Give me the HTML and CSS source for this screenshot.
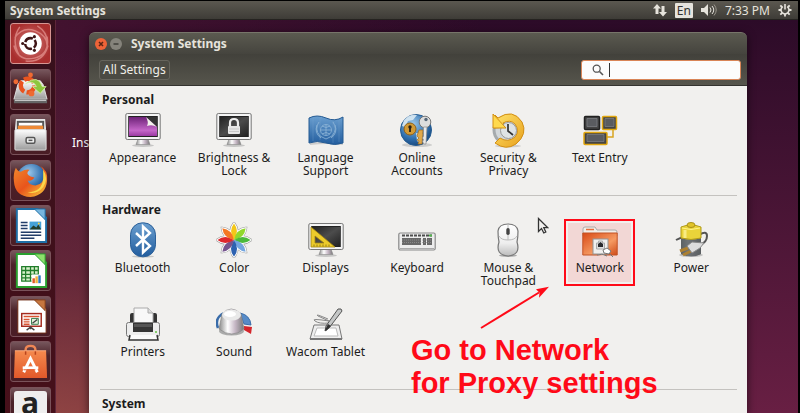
FILE: index.html
```html
<!DOCTYPE html>
<html lang="en">
<head>
<meta charset="utf-8">
<title>System Settings</title>
<link rel="stylesheet" href="styles.css">
</head>
<body>
<svg class="defs" aria-hidden="true">
  <defs>
    <linearGradient id="violet" x1="0" y1="0" x2="0" y2="1"><stop offset="0" stop-color="#6d2277"/><stop offset=".7" stop-color="#c566c9"/><stop offset="1" stop-color="#9b3aa2"/></linearGradient>
    <linearGradient id="dark" x1="0" y1="0" x2="1" y2="1"><stop offset="0" stop-color="#222"/><stop offset=".5" stop-color="#4c4c4c"/><stop offset="1" stop-color="#222"/></linearGradient>
    <linearGradient id="metal" x1="0" y1="0" x2="0" y2="1"><stop offset="0" stop-color="#fff"/><stop offset="1" stop-color="#9b9b9b"/></linearGradient>
    <linearGradient id="mouse" x1="0" y1="0" x2="0" y2="1"><stop offset="0" stop-color="#fff"/><stop offset=".6" stop-color="#eee"/><stop offset="1" stop-color="#bbb"/></linearGradient>
    <linearGradient id="side" x1="0" y1="0" x2="1" y2="0"><stop offset="0" stop-color="#888"/><stop offset=".35" stop-color="#fff"/><stop offset=".65" stop-color="#c5b6c4"/><stop offset="1" stop-color="#777"/></linearGradient>
    <linearGradient id="blue" x1="0" y1="0" x2="0" y2="1"><stop offset="0" stop-color="#6b9fd0"/><stop offset="1" stop-color="#225d9e"/></linearGradient>
    <linearGradient id="gold" x1="0" y1="0" x2="1" y2="1"><stop offset="0" stop-color="#ffe36a"/><stop offset="1" stop-color="#e8a01c"/></linearGradient>
    <linearGradient id="orange" x1="0" y1="0" x2="1" y2="1"><stop offset="0" stop-color="#d94a16"/><stop offset=".6" stop-color="#f59a62"/><stop offset="1" stop-color="#cf4a18"/></linearGradient>
    <linearGradient id="bag" x1="0" y1="0" x2="0" y2="1"><stop offset="0" stop-color="#f58a4e"/><stop offset="1" stop-color="#e2582a"/></linearGradient>
    <linearGradient id="fox" x1="0" y1="0" x2="1" y2="1"><stop offset="0" stop-color="#f08a2c"/><stop offset=".5" stop-color="#e8541c"/><stop offset="1" stop-color="#fbd23c"/></linearGradient>
    <radialGradient id="globe" cx=".4" cy=".3" r=".8"><stop offset="0" stop-color="#9cc8ea"/><stop offset=".6" stop-color="#2f6fae"/><stop offset="1" stop-color="#123b6c"/></radialGradient>
    <symbol id="screen" viewBox="0 0 36 36">
      <ellipse cx="18" cy="33.500" rx="11" ry="1.500" fill="#aaa" opacity=".6"/>
      <path d="M13 27h10l2 5.500H11z" fill="url(#side)" stroke="#888" stroke-width=".6"/>
      <rect x=".8" y="1.500" width="34.400" height="26" rx="1.500" fill="#f4f4f4" stroke="#777"/>
      <rect x="3.200" y="4" width="29.600" height="21" fill="#222"/>
    </symbol>
  </defs>
</svg>

<div class="desktop">
  <header class="panel">
    <span class="panel-title">System Settings</span>
    <div class="indicators">
      <svg class="ind-net" viewBox="0 0 14 14"><path fill="#e6e3dc" d="M4 1 8 5.500H5.500V11h-3V5.500H0zM10 13.500 14 9h-2.500V3h-3v6H6z"/></svg>
      <span class="lang">En</span>
      <svg class="ind-sound" viewBox="0 0 16 14"><path fill="#e6e3dc" d="M0 5h3l4-4v12L3 9H0z"/><path fill="none" stroke="#e6e3dc" d="M9 4.500q2 2.500 0 5M11 3q3.500 4 0 8"/><path fill="none" stroke="#99958c" d="M13 1.500q4.500 5.500 0 11"/></svg>
      <span class="clock">7:33 PM</span>
      <svg class="ind-gear" viewBox="0 0 14 14"><g fill="none" stroke="#e6e3dc"><path stroke-width="1.600" d="M4.800 3.600a4 4 0 1 0 4.400 0M7 1v5.500"/><path stroke-width="1.800" d="M11 7h2.500M.5 7H3M7 11v2.500M9.800 9.800l1.900 1.900M4.200 9.800l-1.900 1.900M10 4l1.700-1.700M4 4 2.300 2.300"/></g></svg>
    </div>
  </header>

  <div class="workspace">
    <nav class="launcher" aria-label="Launcher">
      <a class="tile dash" href="#" aria-label="Dash"><svg viewBox="0 0 40 40"><g fill="none" stroke="#f0a7a1" stroke-width="1.500" opacity=".6"><path d="M4 14Q12 2 25 7T37 24M3 22Q8 39 24 35T37 13M9 3Q0 16 8 31M15 38Q33 40 38 22M27 2Q38 9 37 20"/></g><circle cx="20" cy="20" r="11.500" fill="#fff"/><circle cx="20" cy="20" r="5.500" fill="none" stroke="#3e1516" stroke-width="2.600" stroke-dasharray="9.500 2" stroke-dashoffset="4.700"/><circle cx="12" cy="20" r="1.600" fill="#3e1516"/><circle cx="24" cy="13" r="1.600" fill="#3e1516"/><circle cx="24" cy="27" r="1.600" fill="#3e1516"/></svg></a>
      <a class="tile" href="#" aria-label="Install"><svg viewBox="0 0 40 40"><path d="m7 15 3-4h20l3 4 4 15H3z" fill="url(#metal)" stroke="#ddd"/><path d="M3 30h34v4H3z" fill="#666"/><path d="M4 31h32" stroke="#eee"/><circle cx="17" cy="16" r="7" fill="none" stroke="#e9541f" stroke-width="4.500" stroke-dasharray="12 2.500"/><circle cx="5" cy="12" r="2.500" fill="#ef6a32"/><circle cx="20" cy="5" r="2.500" fill="#ef6a32"/><circle cx="21" cy="24" r="3" fill="#ef6a32"/><path d="M15 14q13-10 17 3h4l-6 7-8-7h4q-3-7-11-3z" fill="#8cc63f" stroke="#d9f0ae" stroke-width=".8"/></svg></a>
      <a class="tile" href="#" aria-label="Files"><svg viewBox="0 0 40 40"><path d="M5 4h30l1 11H4z" fill="#e8e8e8"/><path d="M6 6h28v9H6z" fill="#555"/><path d="M8 8h24v3H8z" fill="#fff"/><path d="M7 11h26v4H7z" fill="#ee8a36"/><rect x="4" y="15" width="32" height="21" rx="1" fill="url(#metal)" stroke="#ddd"/><rect x="15.500" y="23" width="9" height="6" rx="1.500" fill="#eee" stroke="#555" stroke-width="1.500"/><path d="M18 26h4" stroke="#555" stroke-width="1.500"/></svg></a>
      <a class="tile" href="#" aria-label="Firefox"><svg viewBox="0 0 40 40"><circle cx="21" cy="18" r="15" fill="url(#globe)"/><path d="M5 7q2 4 5 4 5-3 9-2-5 4 1 7l4 1q-2 4-7 3 2 5 8 5 9-1 9-11 0-5-4-9 8 4 7 15-1 15-17 17Q4 36 3 21 2 13 5 7z" fill="url(#fox)"/><path d="M33 9q6 9 0 18-7 8-16 5 15 0 16-14z" fill="#fbd84b"/></svg></a>
      <a class="tile" href="#" aria-label="Writer"><svg viewBox="0 0 40 40"><path d="M6 3h21l9 9v25H6z" fill="#fff" stroke="#1e6ea5" stroke-width="2"/><path d="M24 3h11v11z" fill="#78b6df" stroke="#1e6ea5"/><path d="M10 17h7M10 20h7M10 23h7M10 27h21M10 30h21M10 33h14" stroke="#223d69" stroke-width="1.500"/><path d="M19 16h12v8H19z" fill="#46a2d8"/><path d="m19 24 4-4 3 2 2-3 3 5z" fill="#253e2a"/><circle cx="28.500" cy="18" r="1" fill="#ffd43d"/></svg></a>
      <a class="tile" href="#" aria-label="Calc"><svg viewBox="0 0 40 40"><path d="M6 3h21l9 9v25H6z" fill="#fff" stroke="#29a02f" stroke-width="2"/><path d="M24 3h11v11z" fill="#8de06c" stroke="#29a02f"/><path d="M11 16h17v15H11z" fill="#d7f1ca"/><path d="M11 16h17v15H11zM11 20h17M11 24h17M11 27.500h17M15 16v15M20 16v15M24 16v15" fill="none" stroke="#217d2b" stroke-width="1.300"/><path d="M21 24h10v10H21z" fill="#fff"/><path d="M22 28h2.500v5H22z" fill="#e15a27"/><path d="M25 26h2.500v7H25z" fill="#f0b43b"/><path d="M28 25h2.500v8H28z" fill="#2b79c0"/></svg></a>
      <a class="tile" href="#" aria-label="Impress"><svg viewBox="0 0 40 40"><path d="M7 3h20l9 9v25H7z" fill="#fff" stroke="#6e2a12"/><path d="M24 3h11v11z" fill="#c6763f" stroke="#87411b"/><rect x="11" y="17" width="20" height="13" fill="#fff" stroke="#a52b1e" stroke-width="1.500"/><path d="M13 20h16M13 23h6M13 25.500h6M13 28h6" stroke="#d95632" stroke-width="1.500"/><path d="M21 22h7v6h-7z" fill="#e4f0db" stroke="#387d4b"/><path d="m22 27 5-4M16 34l4-3 4 3M20 30v3" fill="none" stroke="#444" stroke-width="1.400"/></svg></a>
      <a class="tile" href="#" aria-label="Software Center"><svg viewBox="0 0 40 40"><path d="M15 13V8q0-4 5-4t5 4v5" fill="none" stroke="#ef8655" stroke-width="2.500"/><path d="M4 9h32l1 28H3z" fill="url(#bag)"/><path d="M15 13V9M25 13V9" stroke="#b8431c" stroke-width="1.500"/><path d="M4 9h32" stroke="#f9ab80"/><path d="m13 31 7-14 7 14" fill="none" stroke="#fff" stroke-width="3"/><path d="M12 26.500h16" stroke="#fff" stroke-width="3"/><path d="M13 28.500h12" stroke="#e2582a"/></svg></a>
      <a class="tile amazon" href="#" aria-label="Amazon"><span>a</span></a>
    </nav>

    <span class="desktop-label">Inst</span>

    <main class="window">
      <div class="titlebar">
        <button class="win-btn close" aria-label="Close"><svg viewBox="0 0 12 12"><path d="m4 4 4 4m0-4-4 4" stroke="#5b2413" stroke-width="1.500"/></svg></button>
        <button class="win-btn" aria-label="Minimize"><svg viewBox="0 0 12 12"><path d="M3.500 6h5" stroke="#3f3e39" stroke-width="1.500"/></svg></button>
        <h1>System Settings</h1>
      </div>
      <div class="toolbar">
        <button class="all">All Settings</button>
        <label class="search">
          <svg viewBox="0 0 12 12"><circle cx="4.700" cy="4.700" r="3.500" fill="none" stroke="#555" stroke-width="1.300"/><path d="m7.500 7.500 3.500 3.500" stroke="#555" stroke-width="1.600"/></svg>
          <span class="caret"></span>
          <input type="text" aria-label="Search settings">
        </label>
      </div>

      <div class="content">
        <section>
          <h2>Personal</h2>
          <div class="grid">
            <a class="item" href="#"><svg viewBox="0 0 36 36"><use href="#screen"/><path d="M4 5h28v19H4z" fill="url(#violet)"/><path d="M21 5h11v10z" fill="#333"/><path d="M21 5q3 5 1 9 5-2 10 1z" fill="#f2f2ea"/></svg><span>Appearance</span></a>
            <a class="item" href="#"><svg viewBox="0 0 36 36"><use href="#screen"/><path d="M4 5h28v19H4z" fill="url(#dark)"/><path d="M14 15v-4q0-4 4-4t4 4v4" fill="none" stroke="#eee" stroke-width="2.200"/><rect x="12" y="14" width="12" height="8" rx="1" fill="#e8e8e8"/><path d="M13 17h10M13 19.500h10" stroke="#bbb" stroke-width=".7"/></svg><span>Brightness &amp;<br>Lock</span></a>
            <a class="item" href="#"><svg viewBox="0 0 36 36"><path d="M2 32q16-2 33 0" stroke="#aaa" stroke-width="2" opacity=".5"/><path d="M1 6q8-4 17 0t17-1v26q-8 3-17 0T1 31z" fill="url(#blue)" stroke="#245a92"/><path d="M5 6v23M12 5v23M25 9v22M31 8v22" stroke="#7fa9d1" opacity=".3"/><g fill="none" stroke="#8fb6d8" stroke-width=".8"><circle cx="18" cy="18" r="5.500"/><path d="M12.500 18h11M18 12.500v11M14 14q4 3 8 0M14 22q4-3 8 0M11 10q-5 7 1 14l6 3 6-3q6-7 1-14M9 13q-3 8 4 13M27 13q3 8-4 13"/></g></svg><span>Language<br>Support</span></a>
            <a class="item" href="#"><svg viewBox="0 0 36 36"><ellipse cx="18" cy="33" rx="15" ry="2" fill="#aaa" opacity=".5"/><circle cx="17" cy="18" r="15.500" fill="url(#globe)" stroke="#255c92"/><path d="M5 8q5-6 13-5l-4 5-5 1-3 6-3-1zM17 21l7 1-2 10-4-3zM22 6l5 2-2 5-5-3z" fill="#e2eef6" opacity=".85"/><circle cx="11" cy="17" r="6" fill="#d29a35" stroke="#8f6118"/><circle cx="11" cy="15" r="1.700" fill="#282018"/><path d="M11 15v5" stroke="#282018" stroke-width="1.800"/><path d="M20 18h4l-1 14h-4l1-3-2-1 2-2-2-2z" fill="#e0a84a" stroke="#9d6d22" stroke-width=".7"/><circle cx="26" cy="10" r="5.800" fill="#ddd" stroke="#777"/><circle cx="27" cy="7.500" r="1.700" fill="#567"/><path d="M24.500 15h3.500l-1 17h-2.500l-1-3 1-1-1-2 1-2z" fill="#e8e8e8" stroke="#888" stroke-width=".7"/></svg><span>Online<br>Accounts</span></a>
            <a class="item" href="#"><svg viewBox="0 0 36 36"><ellipse cx="18" cy="34" rx="13" ry="1.500" fill="#aaa" opacity=".5"/><circle cx="18" cy="18" r="14" fill="#d2d7da" stroke="#a5aaad" stroke-width="3"/><path d="M5 3 4 16l13-1-4-4q7-4 12 1 5 7 0 13-7 6-15 1l-5 5q11 8 21 1 12-10 6-22Q23-4 8 6z" fill="url(#gold)" stroke="#d28f15"/><circle cx="18.500" cy="18.500" r="8" fill="#dfe3e5" stroke="#999"/><path d="M18 12v7l5 4" fill="none" stroke="#333" stroke-width="1.700"/><path d="M3 2v14h13z" fill="#ffd94e" stroke="#d28f15"/></svg><span>Security &amp;<br>Privacy</span></a>
            <a class="item" href="#"><svg viewBox="0 0 36 36"><path d="M31 17v8h-7" fill="none" stroke="#d8a420" stroke-width="1.500"/><g stroke-width="1.500"><rect x="2.500" y="4.500" width="15" height="13" rx="1" fill="#444" stroke="#222"/><rect x="20.500" y="4.500" width="14" height="13" rx="1" fill="#444" stroke="#e2a70f"/><rect x="2" y="20.500" width="23" height="12" rx="1" fill="#444" stroke="#e2a70f"/></g><path d="M5 6.500h10v8H5zM23 6.500h9v8h-9zM5 22.500h17v7H5z" fill="#5a5c60" stroke="#7a7c82" stroke-width=".8"/></svg><span>Text Entry</span></a>
          </div>
        </section>

        <section>
          <h2>Hardware</h2>
          <div class="grid">
            <a class="item" href="#"><svg viewBox="0 0 36 36"><ellipse cx="18" cy="34.500" rx="11" ry="1" fill="#999" opacity=".5"/><rect x="5.500" y=".8" width="25" height="34" rx="12" fill="url(#blue)" stroke="#2b6099"/><path d="m11 11 14 13-7 6.500v-26l7 6.500-14 13" fill="none" stroke="#fff" stroke-width="2.400"/></svg><span>Bluetooth</span></a>
            <a class="item" href="#"><svg viewBox="0 0 36 36"><defs><path id="petal" d="M18 18Q12 9 18 1.500q6 7.500 0 16.500"/></defs><g fill="#999" stroke="#999" stroke-width="3"><use href="#petal"/><use href="#petal" transform="rotate(45 18 18)"/><use href="#petal" transform="rotate(90 18 18)"/><use href="#petal" transform="rotate(135 18 18)"/><use href="#petal" transform="rotate(180 18 18)"/><use href="#petal" transform="rotate(225 18 18)"/><use href="#petal" transform="rotate(270 18 18)"/><use href="#petal" transform="rotate(315 18 18)"/></g><g stroke="#fff" stroke-width="2"><use href="#petal"/><use href="#petal" transform="rotate(45 18 18)"/><use href="#petal" transform="rotate(90 18 18)"/><use href="#petal" transform="rotate(135 18 18)"/><use href="#petal" transform="rotate(180 18 18)"/><use href="#petal" transform="rotate(225 18 18)"/><use href="#petal" transform="rotate(270 18 18)"/><use href="#petal" transform="rotate(315 18 18)"/></g><g><use href="#petal" fill="#f3c719"/><use href="#petal" fill="#91d82c" transform="rotate(45 18 18)"/><use href="#petal" fill="#4cba3c" transform="rotate(90 18 18)"/><use href="#petal" fill="#73a5df" transform="rotate(135 18 18)"/><use href="#petal" fill="#2d62b0" transform="rotate(180 18 18)"/><use href="#petal" fill="#76558e" transform="rotate(225 18 18)"/><use href="#petal" fill="#df282d" transform="rotate(270 18 18)"/><use href="#petal" fill="#f47824" transform="rotate(315 18 18)"/></g></svg><span>Color</span></a>
            <a class="item" href="#"><svg viewBox="0 0 36 36"><use href="#screen"/><path d="M4 5h28v19H4z" fill="url(#dark)"/><path fill-rule="evenodd" d="M3 5v20h24zM7 14v7h9z" fill="#eccb2b" stroke="#a18311" stroke-width=".8"/><path d="M6 24.500v-2m3 2v-2m3 2v-2m3 2v-2m3 2v-2m3 2v-2" stroke="#735d0f" stroke-width=".7"/></svg><span>Displays</span></a>
            <a class="item" href="#"><svg class="wide" viewBox="0 0 38 36"><rect x=".8" y="11" width="36.400" height="17" rx="1.500" fill="#ececec" stroke="#898989" stroke-width="1.200"/><path d="M2 26.500h34" stroke="#aaa"/><path d="M4 13.500h30" stroke="#4d4d4d" stroke-width="2" stroke-dasharray="3 1"/><path d="M4 16h19v7H4zM25 16h3v7h-3zM29 16h5v7h-5z" fill="#686868"/><path d="M4 18h30M4 20.500h30" stroke="#999" stroke-width=".7" stroke-dasharray="1 1"/><path d="M31 13.500h3" stroke="#51b54b" stroke-width="2"/></svg><span>Keyboard</span></a>
            <a class="item" href="#"><svg viewBox="0 0 36 36"><ellipse cx="18" cy="33.500" rx="9" ry="1.500" fill="#aaa"/><path d="M18 2q9 0 10 7 0 7-1 11 4 13-9 14-13-1-9-14-1-4-1-11 1-7 10-7z" fill="url(#mouse)" stroke="#777" stroke-width="1.200"/><path d="M9 14q2 4 9 4t9-4M18 3v15" fill="none" stroke="#bbb"/><rect x="16.300" y="6" width="3.400" height="7" rx="1.700" fill="#444"/></svg><span>Mouse &amp;<br>Touchpad</span></a>
            <a class="item selected" href="#"><svg viewBox="0 0 36 36"><path d="M1 11V7q0-2 2-2h10l2 3h18q2 0 2 2v4H1z" fill="#f2eee9" stroke="#aaa"/><path d="M4 7.500h8" stroke="#e66c3b" stroke-width="1.500"/><path d="M.8 11h34.400v22H.8z" fill="url(#orange)" stroke="#c25325"/><rect x="11" y="17" width="15" height="15" fill="#f0efee" stroke="#949494"/><path d="M14.500 27v-6h2v-2h4v2h2v6z" fill="#ddd" stroke="#aaa"/><path d="M16 25v-3l2.500-2 2.500 2v3z" fill="#29292d"/><path d="m21 28 4-2 4 3-2 3-5-1zM15 33q5-2 10 1M27 31l4 4" fill="#fff" stroke="#777"/></svg><span>Network</span></a>
            <a class="item" href="#"><svg viewBox="0 0 36 36"><path d="M3 18q5-3 10-3t13-2q8-5 8 1t-7 9" fill="none" stroke="#555" stroke-width="2"/><ellipse cx="18" cy="33" rx="12" ry="2" fill="#999" opacity=".5"/><path d="M8 6h20v26q-10 5-20 0z" fill="url(#side)"/><path d="M8 16h20v16q-10 5-20 0z" fill="#555b5d" opacity=".85"/><path d="M8 5q10-4 20 0v11q-10 3-20 0z" fill="#ead33a" stroke="#b29b1b"/><path d="M9 6q9 3 18 0" fill="none" stroke="#fff389"/><ellipse cx="18" cy="3" rx="4" ry="2.500" fill="#e1c329" stroke="#aa9119"/><path d="M12 8v8" stroke="#fff6a4" stroke-width="3" opacity=".7"/><path d="m7 29 8-3M10 33l8-4" stroke="#ad8030" stroke-width="3"/><path d="m14 24 5-4 12 1-4 5-8 5z" fill="#ddd" stroke="#888"/></svg><span>Power</span></a>
            <a class="item" href="#"><svg viewBox="0 0 36 36"><rect x="5" y="7" width="27" height="15" rx="2" fill="#333"/><path d="M9 2h14l5 5v12H9z" fill="#f8f8f8" stroke="#aaa"/><path d="M23 2v5h5" fill="#ddd" stroke="#aaa"/><rect x="1.500" y="16.500" width="33" height="14" rx="2" fill="#ededed" stroke="#777"/><path d="M8 17h20v9H8z" fill="#353535"/><path d="M9 18h18v3H9z" fill="#555"/><path d="m5 29-1 5h29l-1-5" fill="#fafafa" stroke="#333" stroke-width="1.500"/><path d="M30 26h2" stroke="#63c442" stroke-width="1.500"/></svg><span>Printers</span></a>
            <a class="item" href="#"><svg viewBox="0 0 36 36"><path d="M2 22Q-2 12 8 7" fill="none" stroke="#396ca9" stroke-width="2.500"/><path d="M24 7q10 2 11 12l-7-1z" fill="#578bc7" stroke="#396ca9"/><path d="m28 20 8 1-1 7-7-4z" fill="#d4252b"/><ellipse cx="15.500" cy="25" rx="12.500" ry="4.500" fill="#aaa"/><path d="M6 8q9-10 19 0l3 15q-12 10-25 0z" fill="url(#side)" stroke="#888" stroke-width=".7"/><ellipse cx="15.500" cy="9" rx="9.500" ry="5.500" fill="#e9e9e9"/><ellipse cx="14" cy="8" rx="6" ry="3" fill="#fff"/></svg><span>Sound</span></a>
            <a class="item" href="#"><svg viewBox="0 0 36 36"><path d="M6 19h25l3 14H2z" fill="#eee" stroke="#777"/><path d="M9 22h19l2 8H6z" fill="#fff" stroke="#bbb"/><path d="M2 32h32v2H2z" fill="#777"/><path d="M20 13Q6 7 10 10l11 5Q2 12 7 15q4 3 14 2" fill="none" stroke="#888"/><path d="m18 20 12-17q4-1 4 2L21 22l-4 3z" fill="#c5c7c7" stroke="#555"/><path d="m20 18 3 2-5 5-1-1z" fill="#333"/></svg><span>Wacom Tablet</span></a>
          </div>
        </section>

        <section>
          <h2>System</h2>
        </section>

        <svg class="pointer" viewBox="0 0 12 18"><path d="M1.500 1.500v13l3-3 2.300 4.500 2-1-2-4.300h4z" fill="#f1f0ee" stroke="#333" stroke-width="1.300"/></svg>
        <svg class="arrow" viewBox="0 0 72 44"><path d="M1 42 59 6.500" stroke="#ff0a18" stroke-width="2"/><path d="m69 .8-13 2.500 3.500 3.500-.5 5z" fill="#ff0a18"/></svg>
        <p class="note">Go to Network<br>for Proxy settings</p>
      </div>
    </main>
  </div>
</div>
</body>
</html>
```

FILE: styles.css
```css
* { box-sizing: border-box; }

body {
  margin: 0;
  background: #000;
  color: #1c1c1c;
  font: 12px/13px "Noto Sans", "Open Sans", sans-serif;
}

h1, h2, p { margin: 0; }
a { color: inherit; text-decoration: none; }
button, input { font: inherit; }
svg { display: block; }

.defs { position: absolute; width: 0; height: 0; }

.desktop {
  display: flex;
  flex-direction: column;
  height: 100vh;
  padding: 1px 2px 0 5px;
  overflow: hidden;
}

/* Top panel */
.panel {
  display: flex;
  flex: none;
  align-items: center;
  justify-content: space-between;
  height: 19px;
  padding: 0 6px 0 5px;
  background: linear-gradient(#5b5850, #3e3c37);
  border-bottom: 1px solid #252320;
  color: #e6e3dc;
}
.panel-title { font-weight: 700; }
.indicators { display: flex; align-items: center; gap: 8px; }
.ind-net, .ind-gear { width: 14px; height: 14px; }
.ind-sound { width: 16px; height: 14px; }
.lang {
  padding: 1px 2px;
  background: #e6e3dc;
  border-radius: 1px;
  color: #33312d;
}

/* Workspace */
.workspace {
  display: flex;
  flex: 1;
  min-height: 0;
  background:
    radial-gradient(circle at 5% 120%, #a65348 0, #7b373f88 25%, transparent 50%),
    linear-gradient(90deg, #451330 0, transparent 60%),
    linear-gradient(#2c0b28, #681f43);
}

/* Launcher */
.launcher {
  display: grid;
  flex: none;
  grid-template-rows: repeat(9, 1fr);
  align-items: center;
  justify-items: center;
  width: 51px;
  height: calc(100vh - 3px);
  padding-top: 1px;
  background: linear-gradient(#36101c, #47101a);
  border-right: 1px solid #5e2639;
}
.tile {
  width: 41px;
  height: 41px;
  background: linear-gradient(#76565c, #4b2229 35%, #4a1d25);
  border: 1px solid #7a525a;
  border-radius: 3px;
}
.tile svg { width: 39px; height: 39px; }
.dash { background: radial-gradient(#d67d79, #a92e2e 75%); border-color: #d79592; }
.amazon { padding: 3px; }
.amazon span {
  display: block;
  height: 34px;
  background: #eee;
  border-radius: 3px;
  color: #222;
  font: 700 30px/24px "Open Sans", sans-serif;
  text-align: center;
}

.desktop-label {
  flex: none;
  width: 33px;
  padding: 116px 0 0 16px;
  overflow: hidden;
  color: #fff;
}

/* Settings window */
.window {
  display: flex;
  flex: 1;
  flex-direction: column;
  min-width: 0;
  margin: 12px 51px 0 0;
  border-radius: 6px 6px 0 0;
  box-shadow: 0 2px 8px #0009;
}
.titlebar {
  display: flex;
  align-items: center;
  gap: 3px;
  height: 22px;
  padding: 0 6px;
  background: linear-gradient(#5b5a50, #45443e);
  border-top: 1px solid #77756a;
  border-radius: 6px 6px 0 0;
  color: #e6e3dc;
}
.titlebar h1 { margin-left: 6px; font-size: 12px; }
.win-btn {
  width: 12px;
  height: 12px;
  padding: 0;
  background: #85837b;
  border: 0;
  border-radius: 50%;
}
.win-btn.close { background: #ee6338; }

.toolbar {
  display: flex;
  align-items: center;
  justify-content: space-between;
  height: 32px;
  padding: 0 6px 0 10px;
  background: linear-gradient(#42413b, #56554c);
  border-bottom: 1px solid #33322e;
}
.all {
  height: 20px;
  padding: 0 3px;
  background: #4b4a43;
  border: 1px solid #66645c;
  border-radius: 3px;
  color: #f0eee8;
}
.search { position: relative; width: 160px; }
.search svg { position: absolute; top: 4px; left: 11px; width: 12px; height: 12px; }
.caret { position: absolute; top: 3px; left: 28px; width: 1px; height: 14px; background: #333; }
.search input {
  display: block;
  width: 100%;
  height: 20px;
  padding: 0 6px 0 30px;
  background: #fcfcfc;
  border: 1px solid #d98557;
  border-radius: 3px;
  outline: 0;
}

.content {
  position: relative;
  flex: 1;
  min-height: 0;
  padding: 0 10px 0 8px;
  background: #f1f0ee;
}
section {
  margin-left: 3px;
  padding: 6px 0 18px;
  border-bottom: 1px solid #c4c2bf;
}
section:last-of-type { padding-bottom: 0; border: 0; }
h2 { margin-left: 2px; font-size: 12px; line-height: 16px; }

.grid {
  display: grid;
  grid-template-columns: repeat(7, 1fr);
  grid-auto-rows: 65px;
  row-gap: 19px;
  margin: 4px 0 0 -3px;
}
.item {
  position: relative;
  display: flex;
  flex-direction: column;
  align-items: center;
  gap: 3px;
  text-align: center;
  white-space: nowrap;
}
.item svg { flex: none; width: 36px; height: 36px; }
.item .wide { width: 38px; }
.selected::before {
  position: absolute;
  top: -3px;
  right: 11px;
  left: 10px;
  height: 63px;
  background: #ff00001a;
  border: 2px solid #ff0a18;
  box-shadow: inset 0 0 0 2px #f1f0ee;
  content: "";
}
.selected svg, .selected span { z-index: 1; }

/* Annotation over the window */
.pointer { position: absolute; top: 131px; left: 448px; width: 12px; height: 18px; }
.arrow { position: absolute; top: 200px; left: 391px; width: 72px; height: 44px; }
.note {
  position: absolute;
  top: 248px;
  left: 322px;
  color: #ff0a18;
  font: 700 29px/33px "Liberation Sans", Arial, sans-serif;
  white-space: nowrap;
}
```
